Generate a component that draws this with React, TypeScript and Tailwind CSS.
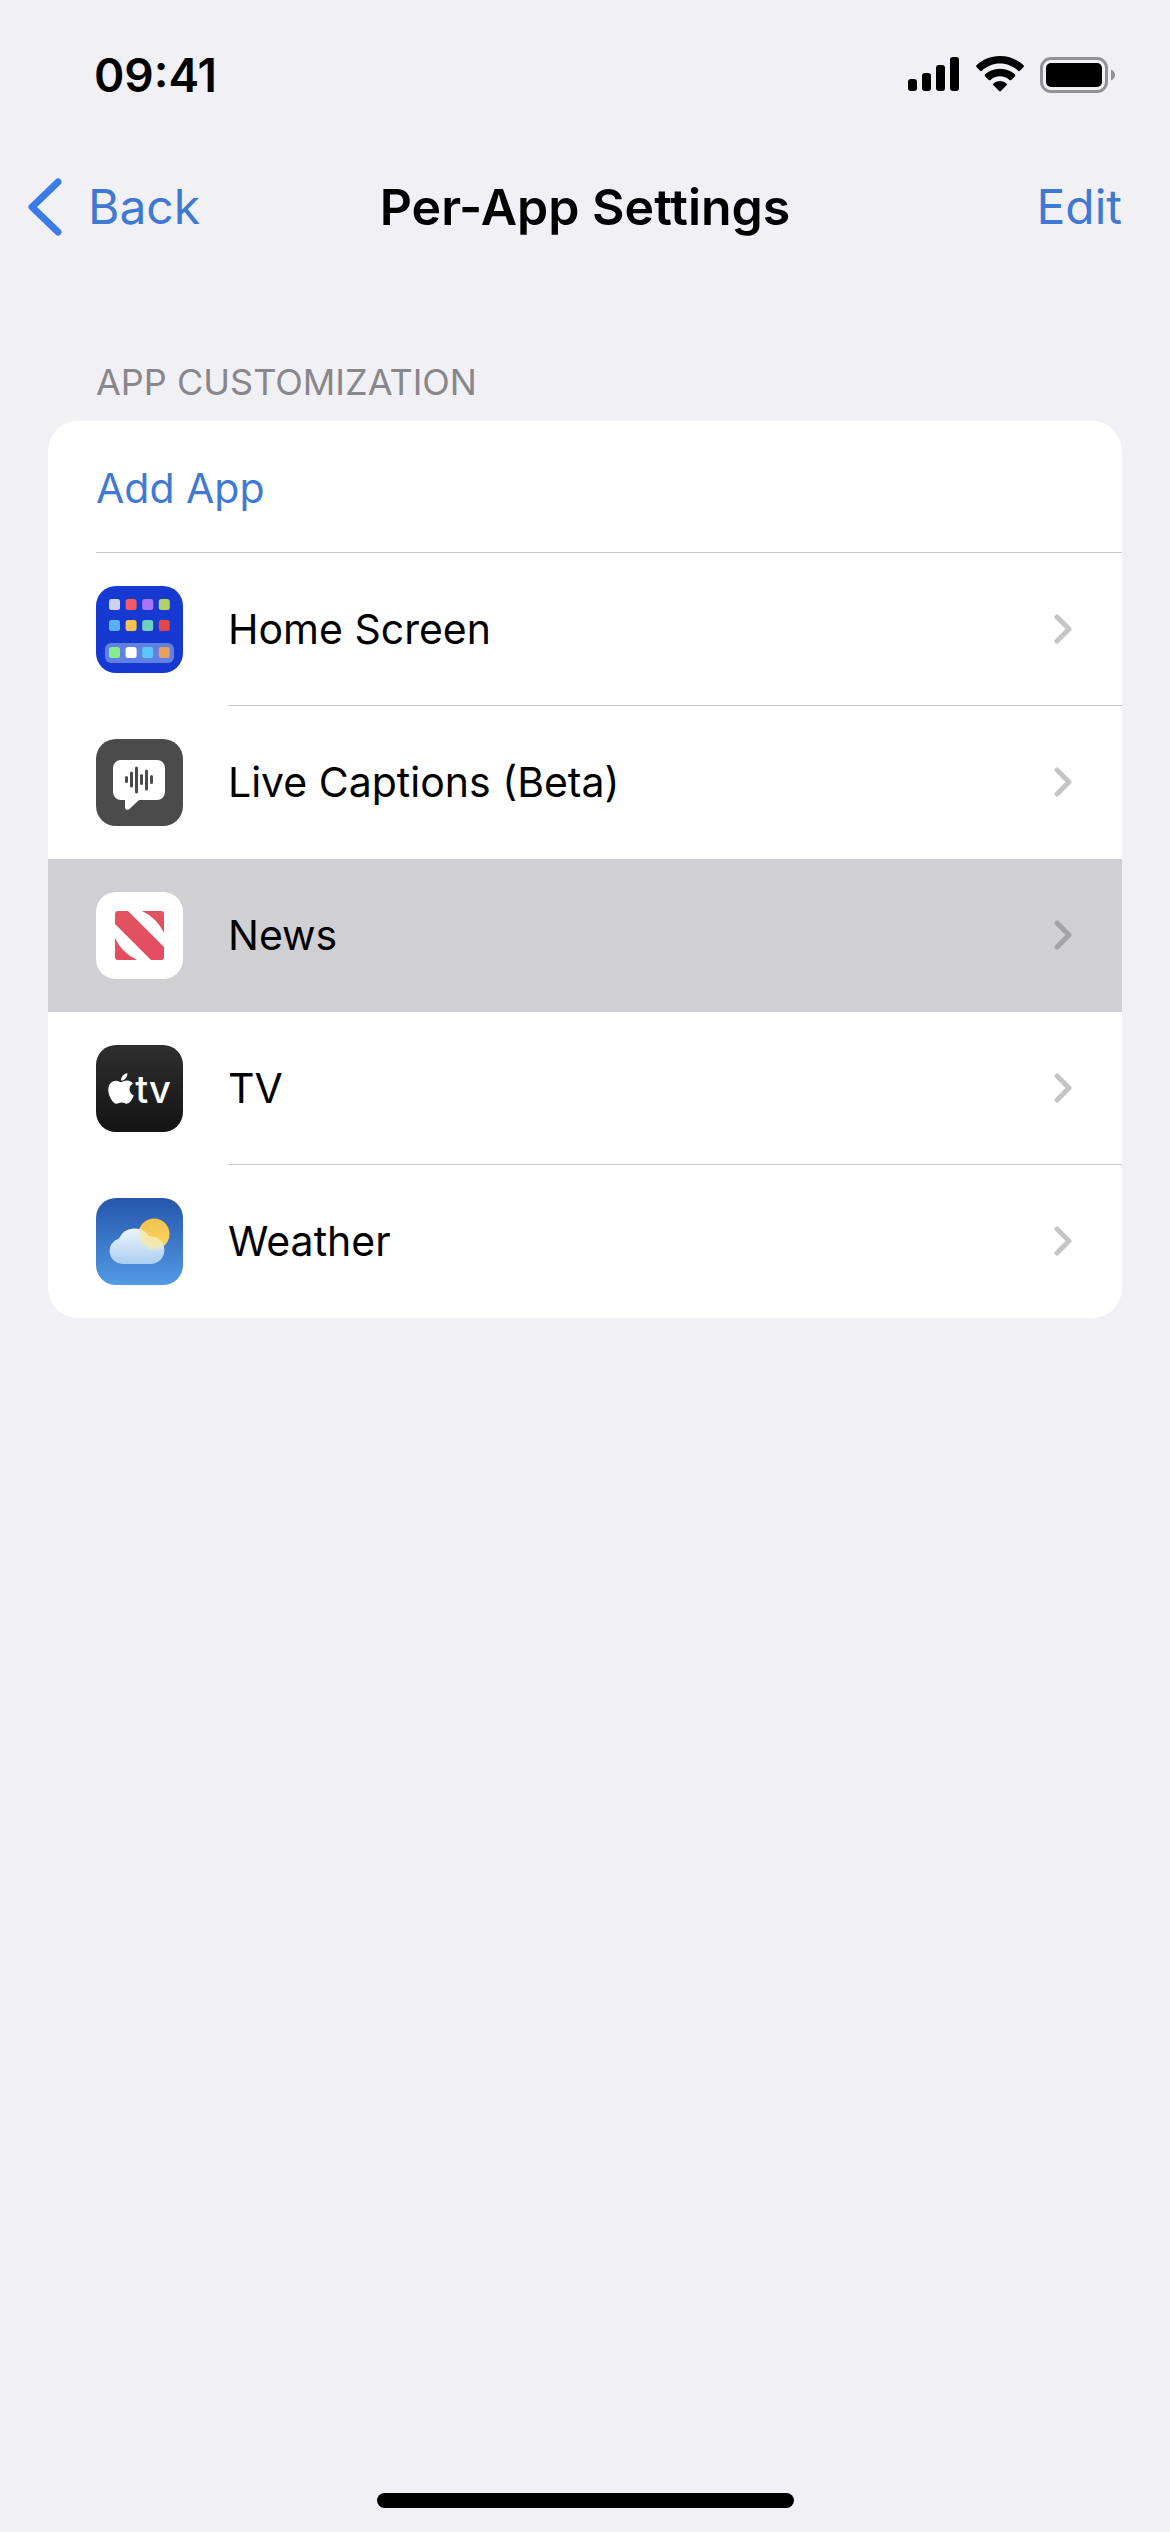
import type { ReactNode } from 'react'
import { clsx } from 'clsx'
import { FaApple } from 'react-icons/fa'

const homeTiles = [
  ['#ccd3e8', '#ee5a68', '#a976fb', '#b3d068'],
  ['#57b2fb', '#f7c254', '#6fd0bd', '#e2484a'],
  ['#86ec8c', '#ffffff', '#5cc6fb', '#e8a060'],
]
const tileRows = [13, 34, 61]

function HomeScreenIcon() {
  return (
    <svg viewBox="0 0 87 87" className="size-full bg-[#1639d2]" aria-hidden="true">
      <rect x="9" y="57" width="69" height="20" rx="6" fill="#6080e2" />
      {homeTiles.map((row, r) =>
        row.map((color, c) => (
          <rect
            key={`${r}-${c}`}
            x={13 + c * 16.6}
            y={tileRows[r]}
            width="11"
            height="11"
            rx="2.5"
            fill={color}
          />
        )),
      )}
    </svg>
  )
}

function LiveCaptionsIcon() {
  return (
    <svg viewBox="0 0 87 87" className="size-full bg-[#4b4b4b]" aria-hidden="true">
      <path
        d="M25 21h36a8 8 0 0 1 8 8v24a8 8 0 0 1-8 8H43l-9.500 9c-1.500 1.400-4.500 1-4.500-1.500V61h-4a8 8 0 0 1-8-8V29a8 8 0 0 1 8-8z"
        fill="#fff"
      />
      <path
        d="M30.500 38.500v4M35.500 34v13M40.500 29v24M45.500 36.500v8M50.500 32v18M55.500 37.500v6"
        stroke="#4b4b4b"
        strokeWidth="3"
        strokeLinecap="round"
      />
    </svg>
  )
}

function NewsIcon() {
  return (
    <svg viewBox="0 0 87 87" className="size-full bg-white" aria-hidden="true">
      <defs>
        <linearGradient id="news" x1="0" y1="0" x2="0" y2="1">
          <stop offset="0" stopColor="#e05560" />
          <stop offset="1" stopColor="#e64a60" />
        </linearGradient>
        <clipPath id="newsBox">
          <rect x="19" y="19" width="49" height="49" rx="3" />
        </clipPath>
      </defs>
      <g clipPath="url(#newsBox)" fill="url(#news)">
        <path d="M19 19h13l36 36v13H55L19 32z" />
        <path d="M46 19h22v22Q61 26 46 19z" />
        <path d="M19 46v22h22Q26 61 19 46z" />
      </g>
    </svg>
  )
}

function TvIcon() {
  return (
    <span className="flex size-full items-center justify-center bg-linear-to-b from-[#2f2f2f] to-[#141414] text-white">
      <FaApple className="mr-px h-[35px] w-[26px]" aria-hidden="true" />
      <span className="text-[38px] leading-none font-medium" aria-hidden="true">
        tv
      </span>
    </span>
  )
}

function WeatherIcon() {
  return (
    <svg viewBox="0 0 87 87" className="size-full" aria-hidden="true">
      <defs>
        <linearGradient id="sky" x1="0" y1="0" x2="0" y2="1">
          <stop offset="0" stopColor="#2655ab" />
          <stop offset="1" stopColor="#529be4" />
        </linearGradient>
        <linearGradient id="sun" x1="0" y1="0" x2="0" y2="1">
          <stop offset="0" stopColor="#f2c14e" />
          <stop offset="1" stopColor="#f8d863" />
        </linearGradient>
        <linearGradient id="cloud" x1="0" y1="0" x2="0" y2="1">
          <stop offset="0" stopColor="#f4f8fd" />
          <stop offset="1" stopColor="#a9cdf0" />
        </linearGradient>
        <radialGradient id="glow" cx="58" cy="36" r="18" gradientUnits="userSpaceOnUse">
          <stop offset="0" stopColor="#fbe58c" />
          <stop offset="0.700" stopColor="#eee9b8" />
          <stop offset="1" stopColor="#dfe9dc" stopOpacity="0" />
        </radialGradient>
        <clipPath id="cloudShape">
          <path d="M26 66a13 13 0 0 1-3-25.500A17 17 0 0 1 53 38.500 13.800 13.800 0 1 1 54 66z" />
        </clipPath>
      </defs>
      <rect width="87" height="87" fill="url(#sky)" />
      <circle cx="58" cy="36" r="15.500" fill="url(#sun)" />
      <g clipPath="url(#cloudShape)">
        <rect x="12" y="27" width="57" height="40" fill="url(#cloud)" />
        <circle cx="58" cy="36" r="18" fill="url(#glow)" />
      </g>
    </svg>
  )
}

type AppRow = {
  name: string
  icon: ReactNode
  selected?: boolean
  divider?: boolean
}

const apps: AppRow[] = [
  { name: 'Home Screen', icon: <HomeScreenIcon />, divider: true },
  { name: 'Live Captions (Beta)', icon: <LiveCaptionsIcon /> },
  { name: 'News', icon: <NewsIcon />, selected: true },
  { name: 'TV', icon: <TvIcon />, divider: true },
  { name: 'Weather', icon: <WeatherIcon /> },
]

function StatusBar() {
  return (
    <div className="flex h-[150px] items-center justify-between pr-[54px] pl-[94px]">
      <span className="text-[46px] leading-none font-semibold">09:41</span>
      <div className="flex items-center">
        <svg viewBox="0 0 52 36" className="mr-4 h-9 w-[52px]" aria-hidden="true">
          <rect x="0" y="22" width="9" height="12" rx="3" />
          <rect x="14" y="16" width="9" height="18" rx="3" />
          <rect x="28" y="8" width="9" height="26" rx="3" />
          <rect x="42" y="0" width="9" height="34" rx="3" />
        </svg>
        <svg viewBox="0 1 48 36" className="mr-4 h-9 w-12 overflow-visible" aria-hidden="true">
          <path d="M24 0C33.500 0 41.500 3.600 47.500 9.200q.9.900 0 1.800l-3.600 3.700q-.9.900-1.800 0C37.200 10.200 31 7.500 24 7.500S10.800 10.200 5.900 14.700q-.9.900-1.800 0L.5 11q-.9-.9 0-1.800C6.500 3.600 14.500 0 24 0z" />
          <path d="M24 12.700c6 0 11.200 2.100 15 5.800q.9.900 0 1.800l-3.700 3.600q-.9.900-1.800 0c-2.600-2.300-5.800-3.600-9.500-3.600s-6.900 1.300-9.500 3.600q-.9.900-1.800 0L9 20.300q-.9-.9 0-1.800c3.800-3.700 9-5.800 15-5.800z" />
          <path d="M24 25c2.500 0 4.700.9 6.500 2.400q.9.900 0 1.800l-5.600 5.900q-.9.900-1.800 0l-5.600-5.900q-.9-.9 0-1.800C19.300 25.900 21.500 25 24 25z" />
        </svg>
        <svg viewBox="0 0 76 36" className="h-9 w-[76px]" aria-hidden="true">
          <rect x="1.500" y="1.500" width="65" height="33" rx="9.500" fill="none" stroke="#929196" strokeWidth="3" />
          <rect x="6" y="6" width="56" height="24" rx="5" />
          <path d="M71 12.500q4 2 4 5.500t-4 5.500z" fill="#929196" />
        </svg>
      </div>
    </div>
  )
}

function NavBar() {
  return (
    <header className="grid h-[114px] grid-cols-[1fr_auto_1fr] items-center px-7 text-[50px] leading-none">
      <button
        type="button"
        className="flex items-center gap-[26px] justify-self-start text-[48px] text-[#4079d4]"
      >
        <svg viewBox="0 0 34 58" className="h-[58px] w-[34px]" fill="none" aria-hidden="true">
          <path d="M30 4 4 29l26 25" stroke="#3a7be8" strokeWidth="7" strokeLinecap="round" strokeLinejoin="round" />
        </svg>
        Back
      </button>
      <h1 className="font-semibold">Per-App Settings</h1>
      <button type="button" className="mr-5 justify-self-end text-[48px] text-[#4079d4]">
        Edit
      </button>
    </header>
  )
}

function AppItem({ name, icon, selected, divider }: AppRow) {
  return (
    <li>
      <a
        href="#"
        aria-current={selected ? 'true' : undefined}
        className={clsx('flex h-[153px] items-center pl-12', selected && 'bg-[#d0cfd4]')}
      >
        <span className="size-[87px] shrink-0 overflow-hidden rounded-[20px]">{icon}</span>
        <span
          className={clsx(
            'ml-[45px] flex h-full flex-1 items-center justify-between border-b pr-[50px]',
            divider ? 'border-[#c8c7cb]' : 'border-transparent',
          )}
        >
          {name}
          <svg viewBox="0 0 18 30" className="h-[30px] w-[18px]" fill="none" aria-hidden="true">
            <path
              d="m3 3 12 12L3 27"
              stroke={selected ? '#a4a3a8' : '#c5c5c7'}
              strokeWidth="5"
              strokeLinecap="round"
              strokeLinejoin="round"
            />
          </svg>
        </span>
      </a>
    </li>
  )
}

export default function App() {
  return (
    <div className="flex min-h-screen flex-col bg-[#f1f0f5] font-['Inter','Liberation_Sans',sans-serif] text-black">
      <StatusBar />
      <NavBar />

      <main className="px-12 pt-24">
        <h2 className="mb-[17px] pl-12 text-[36px] leading-11 text-[#88878c]">APP CUSTOMIZATION</h2>

        <div className="overflow-hidden rounded-[30px] bg-white text-[41px] leading-none">
          <div className="pl-12">
            <button
              type="button"
              className="flex h-[132px] w-full items-center border-b border-[#c8c7cb] pt-1 text-[#4079d4]"
            >
              Add App
            </button>
          </div>
          <ul>
            {apps.map((app) => (
              <AppItem key={app.name} {...app} />
            ))}
          </ul>
        </div>
      </main>

      {/* Home indicator */}
      <div className="mx-auto mt-auto mb-6 h-[15px] w-[417px] rounded-full bg-black" />
    </div>
  )
}
